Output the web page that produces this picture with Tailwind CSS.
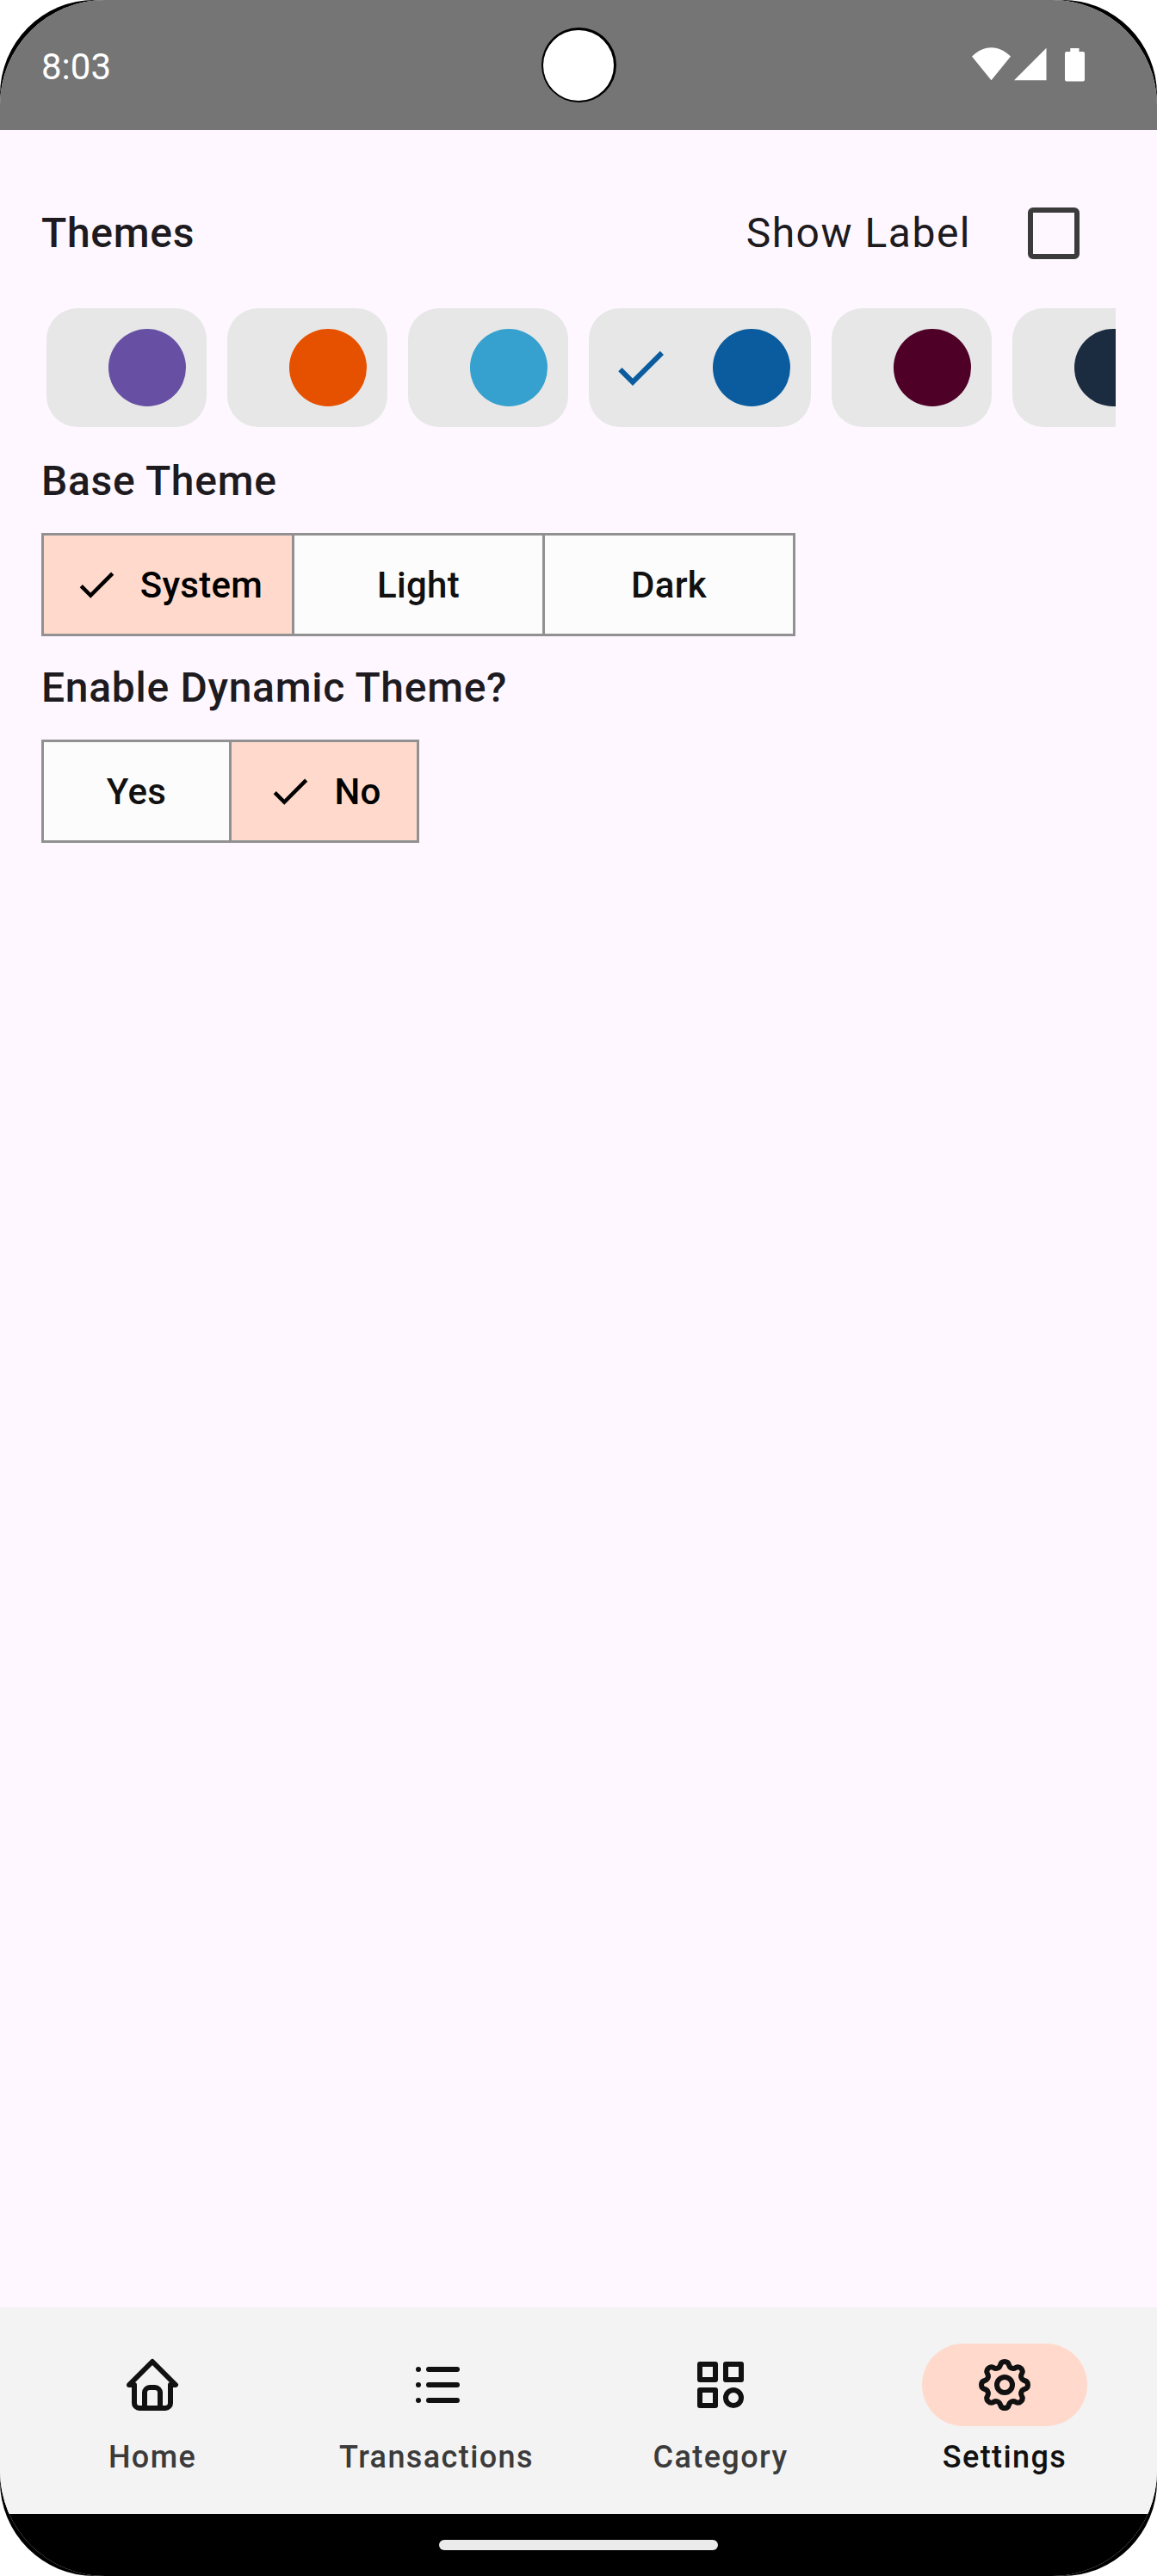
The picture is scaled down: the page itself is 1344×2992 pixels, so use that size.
<!DOCTYPE html>
<html lang="en">
<head>
<meta charset="utf-8">
<title>Settings</title>
<script src="https://cdn.jsdelivr.net/npm/@tailwindcss/browser@4"></script>
</head>
<body class="bg-white font-[Roboto,sans-serif]">
<div class="h-[2992px] w-[1344px] overflow-hidden rounded-[110px] bg-black">
  <div class="relative flex h-full w-full flex-col overflow-hidden rounded-[122px] bg-[#fef7ff] text-[#1d1b20]">
    <!-- Status bar -->
    <header class="flex h-[151px] shrink-0 items-start justify-between bg-[#757575] pr-[84px] pl-12 text-white">
      <span class="pt-[53px] text-[42px] leading-[50px]">8:03</span>
      <svg class="mt-[55px] h-10 w-[131px]" viewBox="0 0 131 40" fill="currentColor">
        <path d="M22.5 38.3 0 10.6C6 4.500 13.500.2 22.500.2S39 4.500 45 10.600z"/>
        <path d="M49 38.300H86.500V.800z"/>
        <path d="M114.300 1h10.200v4H129a2 2 0 0 1 2 2v30.500a2 2 0 0 1-2 2h-19a2 2 0 0 1-2-2V7a2 2 0 0 1 2-2h4.300z"/>
      </svg>
    </header>
    <!-- Camera cutout -->
    <div class="absolute top-[31.5px] left-[628.5px] flex size-[87px] items-center justify-center rounded-full bg-black">
      <div class="mt-px size-[82px] rounded-full bg-white"></div>
    </div>

    <main class="flex flex-1 flex-col items-start px-12 pt-12">
      <div class="flex h-36 w-full items-center justify-between text-5xl leading-[72px]">
        <h2 class="font-medium tracking-[0.7px]">Themes</h2>
        <label class="flex items-center pr-[42px] tracking-[1.5px]">Show Label
          <span class="ml-[66px] size-[60px] rounded-[6px] border-[6px] border-[#3b3b3b]"></span>
        </label>
      </div>

      <div class="mt-[15px] flex w-full gap-6 overflow-hidden pl-[6px]">
        <div class="flex h-[138px] w-[186px] shrink-0 items-center justify-end rounded-[36px] bg-[#e7e7e7] pr-6"><span class="size-[90px] rounded-full bg-[#6750a4]"></span></div>
        <div class="flex h-[138px] w-[186px] shrink-0 items-center justify-end rounded-[36px] bg-[#e7e7e7] pr-6"><span class="size-[90px] rounded-full bg-[#e65100]"></span></div>
        <div class="flex h-[138px] w-[186px] shrink-0 items-center justify-end rounded-[36px] bg-[#e7e7e7] pr-6"><span class="size-[90px] rounded-full bg-[#36a0ce]"></span></div>
        <div class="flex h-[138px] w-[258px] shrink-0 items-center justify-between rounded-[36px] bg-[#e7e7e7] px-6">
          <svg class="size-[72px] text-[#0a5c9e]" viewBox="0 0 24 24" fill="currentColor"><path d="M9 16.170 4.830 12l-1.420 1.410L9 19 21 7l-1.410-1.410z"/></svg>
          <span class="size-[90px] rounded-full bg-[#0a5c9e]"></span>
        </div>
        <div class="flex h-[138px] w-[186px] shrink-0 items-center justify-end rounded-[36px] bg-[#e7e7e7] pr-6"><span class="size-[90px] rounded-full bg-[#4e0027]"></span></div>
        <div class="flex h-[138px] w-[186px] shrink-0 items-center justify-end rounded-[36px] bg-[#e7e7e7] pr-6"><span class="size-[90px] rounded-full bg-[#1b2b40]"></span></div>
      </div>

      <h2 class="mt-[27px] text-5xl leading-[72px] font-medium tracking-[0.7px]">Base Theme</h2>
      <div class="mt-6 flex h-[120px] w-[876px] divide-x-3 divide-[#919191] border-3 border-[#919191] bg-[#fcfcfc] text-[42px] font-medium tracking-[0.3px] text-[#111]">
        <button class="flex w-[291px] items-center justify-center gap-6 bg-[#ffdacc] text-black">
          <svg class="size-[54px]" viewBox="0 0 24 24" fill="currentColor"><path d="M9 16.170 4.830 12l-1.420 1.410L9 19 21 7l-1.410-1.410z"/></svg>System
        </button>
        <button class="w-[291px]">Light</button>
        <button class="w-[288px]">Dark</button>
      </div>

      <h2 class="mt-6 text-5xl leading-[72px] font-medium tracking-[0.7px]">Enable Dynamic Theme?</h2>
      <div class="mt-6 flex h-[120px] w-[439px] divide-x-3 divide-[#919191] border-3 border-[#919191] bg-[#fcfcfc] text-[42px] font-medium tracking-[0.3px] text-[#111]">
        <button class="w-[218px]">Yes</button>
        <button class="flex w-[215px] items-center justify-center gap-6 bg-[#ffdacc] text-black">
          <svg class="size-[54px]" viewBox="0 0 24 24" fill="currentColor"><path d="M9 16.170 4.830 12l-1.420 1.410L9 19 21 7l-1.410-1.410z"/></svg>No
        </button>
      </div>
    </main>

    <!-- Bottom navigation -->
    <nav class="grid h-60 shrink-0 grid-cols-4 gap-6 bg-[#f3f3f3] px-6 text-4xl leading-[48px] font-medium tracking-[1.4px] text-[#3b3b3b]">
      <a class="flex flex-col items-center justify-center gap-3">
        <span class="flex h-24 w-48 items-center justify-center text-[#111]">
          <svg class="size-[72px]" viewBox="0 0 24 24" fill="none" stroke="currentColor" stroke-width="2" stroke-linecap="round" stroke-linejoin="round"><path d="M5 12H3l9-9 9 9h-2M5 12v7a2 2 0 0 0 2 2h10a2 2 0 0 0 2-2v-7M9 21v-6a2 2 0 0 1 2-2h2a2 2 0 0 1 2 2v6"/></svg>
        </span>
        <span>Home</span>
      </a>
      <a class="flex flex-col items-center justify-center gap-3">
        <span class="flex h-24 w-48 items-center justify-center text-[#111]">
          <svg class="size-[72px]" viewBox="0 0 24 24" fill="none" stroke="currentColor" stroke-width="2" stroke-linecap="round" stroke-linejoin="round"><path d="M9 6h11M9 12h11M9 18h11M5 6v.01M5 12v.01M5 18v.01"/></svg>
        </span>
        <span>Transactions</span>
      </a>
      <a class="flex flex-col items-center justify-center gap-3">
        <span class="flex h-24 w-48 items-center justify-center text-[#111]">
          <svg class="size-[72px]" viewBox="0 0 24 24" fill="none" stroke="currentColor" stroke-width="2" stroke-linecap="round" stroke-linejoin="round"><path d="M4 4h6v6H4zM14 4h6v6h-6zM4 14h6v6H4z"/><circle cx="17" cy="17" r="3"/></svg>
        </span>
        <span>Category</span>
      </a>
      <a class="flex flex-col items-center justify-center gap-3 text-[#111]">
        <span class="flex h-24 w-48 items-center justify-center rounded-full bg-[#ffdacc]">
          <svg class="size-[72px]" viewBox="0 0 24 24" fill="none" stroke="currentColor" stroke-width="2" stroke-linecap="round" stroke-linejoin="round"><path d="M10.325 4.317c.426-1.756 2.924-1.756 3.350 0a1.724 1.724 0 0 0 2.573 1.066c1.543-.940 3.310.826 2.370 2.370a1.724 1.724 0 0 0 1.065 2.572c1.756.426 1.756 2.924 0 3.350a1.724 1.724 0 0 0-1.066 2.573c.940 1.543-.826 3.310-2.370 2.370a1.724 1.724 0 0 0-2.572 1.065c-.426 1.756-2.924 1.756-3.350 0a1.724 1.724 0 0 0-2.573-1.066c-1.543.940-3.310-.826-2.370-2.370a1.724 1.724 0 0 0-1.065-2.572c-1.756-.426-1.756-2.924 0-3.350a1.724 1.724 0 0 0 1.066-2.573c-.940-1.543.826-3.310 2.370-2.370 1 .608 2.296.070 2.572-1.065z"/><circle cx="12" cy="12" r="3"/></svg>
        </span>
        <span>Settings</span>
      </a>
    </nav>
    <!-- Gesture bar -->
    <div class="flex h-[72px] shrink-0 justify-center bg-black pt-[30px]">
      <div class="h-3 w-[324px] rounded-full bg-[#ebebeb]"></div>
    </div>
  </div>
</div>
</body>
</html>
